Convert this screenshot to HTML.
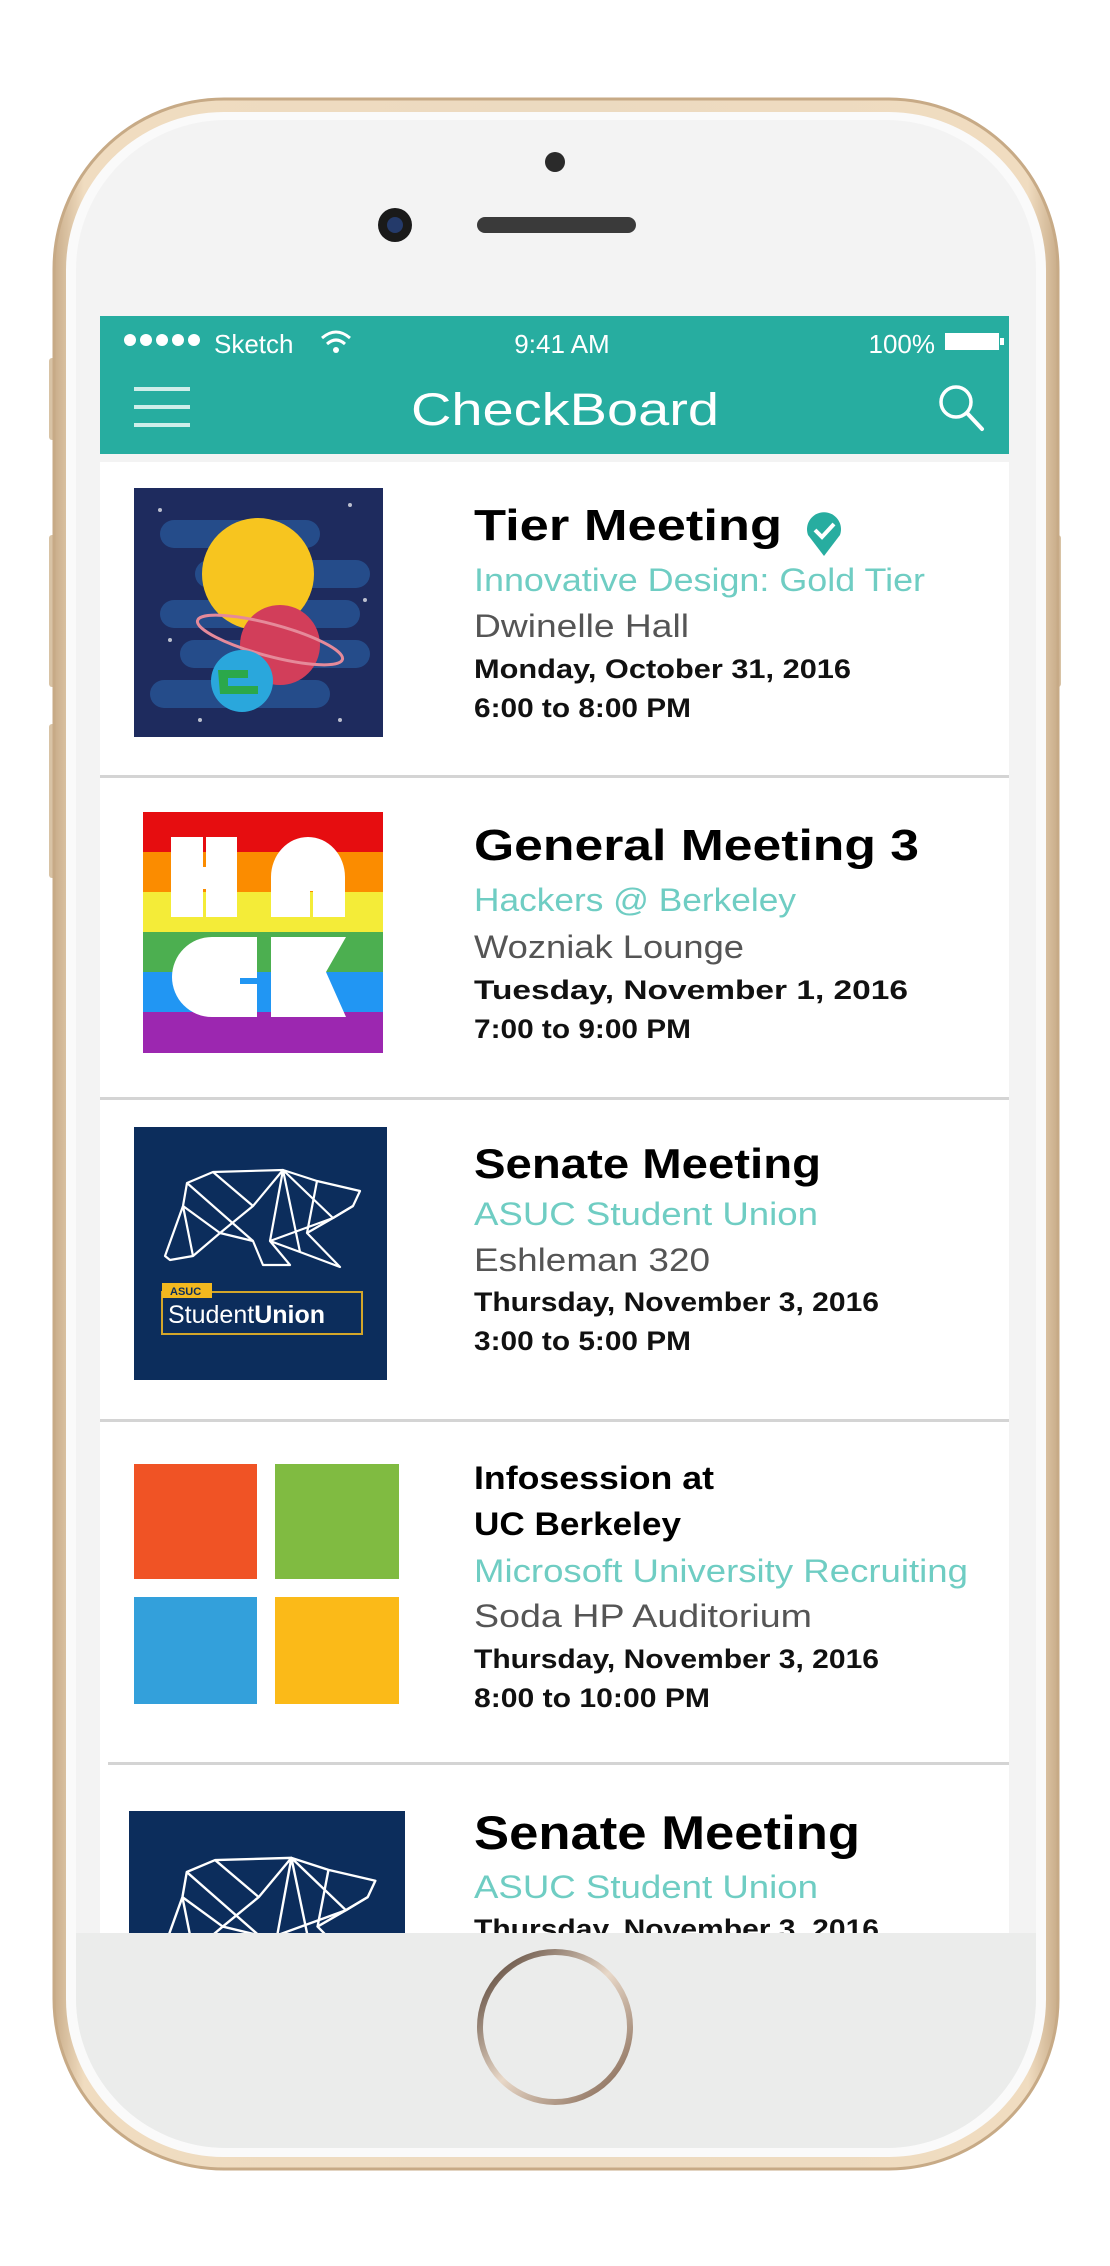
<!DOCTYPE html>
<html><head><meta charset="utf-8"><style>
html,body{margin:0;padding:0;background:#fff;}
svg{display:block}
text{font-family:"Liberation Sans",sans-serif}
</style></head><body>
<svg width="1110" height="2266" viewBox="0 0 1110 2266" xmlns="http://www.w3.org/2000/svg">
<defs>
<linearGradient id="gold" x1="0" x2="1" y1="0" y2="0">
<stop offset="0" stop-color="#c9ad8a"/><stop offset="0.03" stop-color="#f0dcc0"/><stop offset="0.5" stop-color="#ecdac0"/><stop offset="0.97" stop-color="#f0dcc0"/><stop offset="1" stop-color="#c9ad8a"/>
</linearGradient>
<linearGradient id="ring" x1="0" x2="1" y1="0" y2="1">
<stop offset="0" stop-color="#4a3528"/><stop offset="0.5" stop-color="#e8d8c8"/><stop offset="1" stop-color="#7a5c48"/>
</linearGradient>
<clipPath id="scr"><rect x="100" y="316" width="909" height="1617"/></clipPath>
<clipPath id="face"><rect x="76" y="120" width="960" height="2028" rx="150"/></clipPath>
<g id="bear" fill="none" stroke="#fff" stroke-width="2.2" stroke-linejoin="round">
<path d="M53,56 L79,45 L149,43 L183,54 L226,64 L219,79 L199,91 L173,106 L206,140 L166,125 L136,114 L156,138 L129,138 L119,114 L86,106 L59,129 L36,133 L31,129 L49,79 Z"/>
<path d="M53,56 L119,114 M79,45 L119,79 L149,43 L136,114 M149,43 L199,91 M119,79 L86,106 M49,79 L86,106 L119,79 M149,43 L166,125 M136,114 L199,91 M183,54 L173,106 M59,129 L49,79 M199,91 L219,79"/>
</g>
</defs>

<!-- phone body -->
<rect x="49" y="358" width="10" height="82" rx="3" fill="#d8c3a5"/>
<rect x="49" y="535" width="10" height="152" rx="3" fill="#d8c3a5"/>
<rect x="49" y="724" width="10" height="154" rx="3" fill="#d8c3a5"/>
<rect x="1052" y="535" width="9" height="152" rx="3" fill="#d8c3a5"/>
<rect x="54" y="99" width="1004" height="2070" rx="170" fill="url(#gold)" stroke="#c7aa86" stroke-width="3"/>
<rect x="66" y="112" width="980" height="2045" rx="158" fill="#fafafa"/>
<g clip-path="url(#face)">
<rect x="76" y="120" width="960" height="2028" fill="#f3f3f3"/>
<rect x="76" y="1933" width="960" height="215" fill="#ebeceb"/>
</g>

<!-- earpiece / camera -->
<circle cx="555" cy="162" r="10" fill="#2a2a2a"/>
<circle cx="395" cy="225" r="17" fill="#1a1a1a"/>
<circle cx="395" cy="225" r="8" fill="#243a6a"/>
<rect x="477" y="217" width="159" height="16" rx="8" fill="#3a3a3a"/>

<!-- home button -->
<circle cx="555" cy="2027" r="75" fill="none" stroke="url(#ring)" stroke-width="6"/>

<!-- screen -->
<g clip-path="url(#scr)">
<rect x="100" y="316" width="909" height="1617" fill="#fff"/>
<rect x="100" y="316" width="909" height="138" fill="#27ada0"/>
<rect x="100" y="454" width="909" height="8" fill="#f0f0f0" opacity="0.8"/>
<g fill="#fff"><circle cx="130" cy="340" r="6"/><circle cx="146" cy="340" r="6"/><circle cx="162" cy="340" r="6"/><circle cx="178" cy="340" r="6"/><circle cx="194" cy="340" r="6"/></g>
<text x="214" y="353" font-size="26" fill="#fff">Sketch</text>
<g fill="none" stroke="#fff" stroke-width="3"><path d="M322,338 q14,-12 28,0"/><path d="M327,344 q9,-8 18,0"/></g>
<circle cx="336" cy="350" r="3" fill="#fff"/>
<text x="562" y="353" font-size="26" fill="#fff" text-anchor="middle">9:41 AM</text>
<text x="935" y="353" font-size="26" fill="#fff" text-anchor="end">100%</text>
<rect x="945" y="333" width="54" height="17" fill="#fff"/><rect x="1000" y="338" width="4" height="7" fill="#fff"/>
<g stroke="#cfeeea" stroke-width="4"><line x1="134" y1="389" x2="190" y2="389"/><line x1="134" y1="407" x2="190" y2="407"/><line x1="134" y1="425" x2="190" y2="425"/></g>
<text x="565" y="425" font-size="45" fill="#fff" text-anchor="middle" textLength="308" lengthAdjust="spacingAndGlyphs">CheckBoard</text>
<circle cx="956" cy="402" r="15" fill="none" stroke="#fff" stroke-width="3.5"/>
<line x1="967" y1="413" x2="982" y2="429" stroke="#fff" stroke-width="4" stroke-linecap="round"/>

<g fill="#d4d4d4"><rect x="100" y="775" width="909" height="3"/><rect x="100" y="1097" width="909" height="3"/><rect x="100" y="1419" width="909" height="3"/><rect x="108" y="1762" width="901" height="3"/></g>

<rect x="134" y="488" width="249" height="249" fill="#1e2b5e"/>
<g fill="#26508f" opacity="0.9">
<rect x="160" y="520" width="160" height="28" rx="14"/><rect x="195" y="560" width="175" height="28" rx="14"/><rect x="160" y="600" width="200" height="28" rx="14"/><rect x="180" y="640" width="190" height="28" rx="14"/><rect x="150" y="680" width="180" height="28" rx="14"/>
</g>
<circle cx="258" cy="574" r="56" fill="#f7c51f"/>
<circle cx="280" cy="645" r="40" fill="#d23e5a"/>
<ellipse cx="270" cy="640" rx="75" ry="16" fill="none" stroke="#e58a9a" stroke-width="3" transform="rotate(15 270 640)"/>
<circle cx="242" cy="681" r="31" fill="#2aa7dc"/>
<path d="M218,670 h30 v8 h-20 v8 h30 v8 h-38z" fill="#2ba84a"/>
<g fill="#fff" opacity="0.7"><circle cx="160" cy="510" r="2"/><circle cx="350" cy="505" r="2"/><circle cx="365" cy="600" r="2"/><circle cx="170" cy="640" r="2"/><circle cx="340" cy="720" r="2"/><circle cx="200" cy="720" r="2"/></g>
<path d="M824,556 L808,535 A17,17 0 1 1 840,535 Z" fill="#27ada0"/>
<path d="M815,530 l7,7 l12,-13" fill="none" stroke="#fff" stroke-width="4"/>

<rect x="143" y="812" width="240" height="40" fill="#e60d10"/>
<rect x="143" y="852" width="240" height="40" fill="#fb8c00"/>
<rect x="143" y="892" width="240" height="40" fill="#f4ec38"/>
<rect x="143" y="932" width="240" height="40" fill="#4caf50"/>
<rect x="143" y="972" width="240" height="40" fill="#2196f3"/>
<rect x="143" y="1012" width="240" height="41" fill="#9c27b0"/>
<g fill="#fff">
<path d="M171,837 h32 v30 h3 v-30 h31 v80 h-31 v-28 h-3 v28 h-32z"/>
<path d="M271,917 v-40 a37,40 0 0 1 74,0 v40 h-32 v-26 h-3 v26z"/>
<path d="M257,937 v80 h-45 a40,40 0 0 1 0,-80 z"/>
<path d="M271,937 h75 l-20,35 l20,45 h-75z"/>
</g>
<rect x="240" y="978" width="20" height="6" fill="#2196f3"/>

<rect x="134" y="1127" width="253" height="253" fill="#0c2d5c"/>
<use href="#bear" transform="translate(134,1127)"/>
<rect x="162" y="1292" width="200" height="42" fill="none" stroke="#d4a62a" stroke-width="2"/>
<rect x="162" y="1283" width="50" height="15" fill="#f2b81f"/>
<text x="170" y="1295" font-size="11" font-weight="bold" fill="#0c2d5c">ASUC</text>
<text x="168" y="1323" font-size="25" fill="#fff">Student<tspan font-weight="bold">Union</tspan></text>

<rect x="134" y="1464" width="123" height="115" fill="#f05325"/>
<rect x="275" y="1464" width="124" height="115" fill="#80bb41"/>
<rect x="134" y="1597" width="123" height="107" fill="#33a0db"/>
<rect x="275" y="1597" width="124" height="107" fill="#fbba18"/>

<rect x="129" y="1811" width="276" height="276" fill="#0c2d5c"/>
<use href="#bear" transform="translate(129,1811) scale(1.09)"/>

<g fill="#000" font-weight="bold">
<text x="474" y="540" font-size="44" textLength="308" lengthAdjust="spacingAndGlyphs">Tier Meeting</text>
<text x="474" y="860" font-size="44" textLength="445" lengthAdjust="spacingAndGlyphs">General Meeting 3</text>
<text x="474" y="1178" font-size="42" textLength="347" lengthAdjust="spacingAndGlyphs">Senate Meeting</text>
<text x="474" y="1489" font-size="32" textLength="240" lengthAdjust="spacingAndGlyphs">Infosession at</text>
<text x="474" y="1535" font-size="32" textLength="207" lengthAdjust="spacingAndGlyphs">UC Berkeley</text>
<text x="474" y="1849" font-size="47" textLength="386" lengthAdjust="spacingAndGlyphs">Senate Meeting</text>
</g>
<g fill="#6fcdc3" font-size="32">
<text x="474" y="591" textLength="451" lengthAdjust="spacingAndGlyphs">Innovative Design: Gold Tier</text>
<text x="474" y="911" textLength="322" lengthAdjust="spacingAndGlyphs">Hackers @ Berkeley</text>
<text x="474" y="1225" textLength="344" lengthAdjust="spacingAndGlyphs">ASUC Student Union</text>
<text x="474" y="1582" textLength="494" lengthAdjust="spacingAndGlyphs">Microsoft University Recruiting</text>
<text x="474" y="1898" textLength="344" lengthAdjust="spacingAndGlyphs">ASUC Student Union</text>
</g>
<g fill="#555" font-size="32">
<text x="474" y="637" textLength="215" lengthAdjust="spacingAndGlyphs">Dwinelle Hall</text>
<text x="474" y="958" textLength="270" lengthAdjust="spacingAndGlyphs">Wozniak Lounge</text>
<text x="474" y="1271" textLength="236" lengthAdjust="spacingAndGlyphs">Eshleman 320</text>
<text x="474" y="1627" textLength="338" lengthAdjust="spacingAndGlyphs">Soda HP Auditorium</text>
</g>
<g fill="#111" font-size="27" font-weight="bold">
<text x="474" y="678" textLength="377" lengthAdjust="spacingAndGlyphs">Monday, October 31, 2016</text>
<text x="474" y="717" textLength="217" lengthAdjust="spacingAndGlyphs">6:00 to 8:00 PM</text>
<text x="474" y="999" textLength="434" lengthAdjust="spacingAndGlyphs">Tuesday, November 1, 2016</text>
<text x="474" y="1038" textLength="217" lengthAdjust="spacingAndGlyphs">7:00 to 9:00 PM</text>
<text x="474" y="1311" textLength="405" lengthAdjust="spacingAndGlyphs">Thursday, November 3, 2016</text>
<text x="474" y="1350" textLength="217" lengthAdjust="spacingAndGlyphs">3:00 to 5:00 PM</text>
<text x="474" y="1668" textLength="405" lengthAdjust="spacingAndGlyphs">Thursday, November 3, 2016</text>
<text x="474" y="1707" textLength="236" lengthAdjust="spacingAndGlyphs">8:00 to 10:00 PM</text>
<text x="474" y="1938" textLength="405" lengthAdjust="spacingAndGlyphs">Thursday, November 3, 2016</text>
</g>
</g>
</svg>
</body></html>
